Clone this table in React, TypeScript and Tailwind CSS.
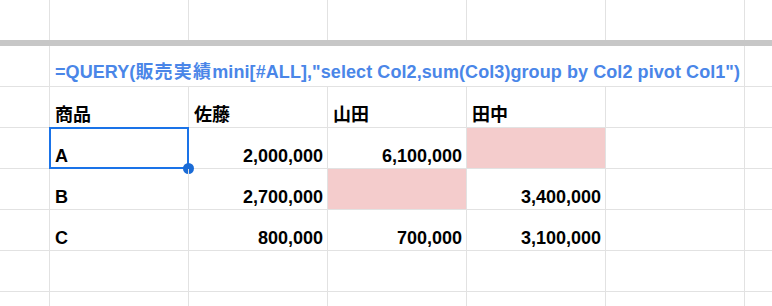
import React from "react"

const FONT = "[font-family:'Liberation_Sans','Noto_Sans_CJK_JP',Arial,sans-serif]"
const LINE = "border-[#e2e2e2]"

const widths = ["w-[50px]", "w-[139px]", "w-[139px]", "w-[139px]", "w-[139px]", "w-[139px]"]

type Cell = { text?: string; align?: "left" | "right"; pink?: boolean }

const rows: Cell[][] = [
  [{ text: "商品" }, { text: "佐藤" }, { text: "山田" }, { text: "田中" }, {}],
  [{ text: "A" }, { text: "2,000,000", align: "right" }, { text: "6,100,000", align: "right" }, { pink: true }, {}],
  [{ text: "B" }, { text: "2,700,000", align: "right" }, { pink: true }, { text: "3,400,000", align: "right" }, {}],
  [{ text: "C" }, { text: "800,000", align: "right" }, { text: "700,000", align: "right" }, { text: "3,100,000", align: "right" }, {}],
  [{}, {}, {}, {}, {}],
  [{}, {}, {}, {}, {}],
]

function EmptyRow({ height }: { height: string }) {
  return (
    <div className={`flex ${height}`}>
      {widths.map((w, i) => (
        <div key={i} className={`${w} shrink-0 border-r ${LINE}`} />
      ))}
      <div className="flex-1" />
    </div>
  )
}

export default function App() {
  return (
    <div className={`h-[306px] w-[772px] overflow-hidden bg-white text-black ${FONT}`}>
      <EmptyRow height="h-[40px]" />
      <div className="h-[6px] bg-[#c7c7c7]" />

      {/* formula row, text spills over the hidden gridlines */}
      <div className={`flex h-[41px] border-b ${LINE}`}>
        <div className={`w-[50px] shrink-0 border-r ${LINE}`} />
        <div className={`flex w-[695px] shrink-0 items-end whitespace-nowrap border-r ${LINE} pb-[4px] pl-[5px] text-[18px] font-bold leading-[20px] tracking-[0.08px] text-[#4a86e8]`}>
          =QUERY(<span className="tracking-[1.2px]">販売実績</span>mini[#ALL],"select Col2,sum(Col3)group by Col2 pivot Col1")
        </div>
        <div className="flex-1" />
      </div>

      {rows.map((row, r) => (
        <div key={r} className={`relative flex h-[41px] border-b ${LINE}`}>
          <div className={`w-[50px] shrink-0 border-r ${LINE}`} />
          {row.slice(0, 5).map((cell, c) => (
            <div
              key={c}
              className={`flex w-[139px] shrink-0 items-end whitespace-nowrap border-r ${LINE} px-[5px] pb-[2px] text-[18px] font-bold leading-[20px] ${
                cell.align === "right" ? "justify-end pr-[4px]" : "justify-start"
              } ${cell.pink ? "bg-[#f4cccc]" : ""}`}
            >
              {cell.text}
            </div>
          ))}
          <div className="flex-1" />

          {r === 1 && (
            <>
              <div className="pointer-events-none absolute left-[49px] top-[-1px] h-[42px] w-[140px] border-2 border-[#1a73e8]" />
              <div className="absolute left-[183px] top-[35px] h-[11px] w-[11px] rounded-full bg-[#1a6bd6]" />
            </>
          )}
        </div>
      ))}
    </div>
  )
}
